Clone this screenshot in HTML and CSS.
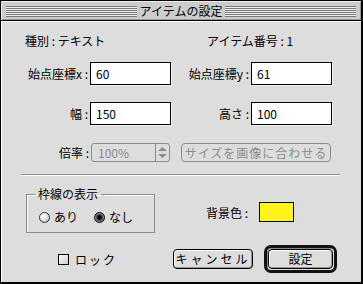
FILE: index.html
```html
<!DOCTYPE html>
<html lang="ja">
	<head>
		<meta charset="UTF-8" />
		<title>アイテムの設定</title>
		<link rel="stylesheet" href="styles.css">
	</head>
	<body>
		<div class="window">
			<div class="titlebar">
				<span class="stripes"></span>
				<span class="title">アイテムの設定</span>
				<span class="stripes"></span>
			</div>
			<div class="content">
				<div class="info-row">
					<span class="kind">種別 : テキスト</span>
					<span>アイテム番号 : 1</span>
				</div>
				<div class="fields">
					<label>始点座標x :</label>
					<div class="edit">60</div>
					<label>始点座標y :</label>
					<div class="edit">61</div>
					<label>幅 :</label>
					<div class="edit">150</div>
					<label>高さ :</label>
					<div class="edit">100</div>
				</div>
				<div class="scale-row">
					<label>倍率 :</label>
					<div class="popup">
						<span class="popup-value">100%</span>
						<span class="popup-arrows">
							<svg width="9" height="11" viewBox="0 0 9 11">
								<path d="M4.5 0 L9 4 L0 4 Z M0 7 L9 7 L4.5 11 Z" fill="#8c8c8c" />
							</svg>
						</span>
					</div>
					<div class="btn disabled fit">サイズを画像に合わせる</div>
				</div>
				<div class="sep"></div>
				<div class="style-row">
					<fieldset class="group">
						<legend>枠線の表示</legend>
						<div class="radio-row">
							<span class="radio"><span class="dot"></span>あり</span>
							<span class="radio on"><span class="dot"></span>なし</span>
						</div>
					</fieldset>
					<div class="bg-color">
						<span>背景色 :</span>
						<span class="swatch"></span>
					</div>
				</div>
				<div class="bottom-row">
					<div class="check"><span class="box"></span>ロック</div>
					<div class="btn cancel">キャンセル</div>
					<div class="default-ring">
						<div class="btn ok">設定</div>
					</div>
				</div>
			</div>
		</div>
	</body>
</html>
```

FILE: styles.css
```css
body {
	margin: 0;
	font-family: "Noto Sans CJK JP", sans-serif;
	font-size: 12px;
	color: #000;
	background: #fff;
}
.window {
	width: 363px;
	height: 284px;
	box-sizing: border-box;
	border: 1px solid #000;
	border-right-width: 2px;
	border-bottom-width: 2px;
	background: #dddddd;
	display: flex;
	flex-direction: column;
}
.titlebar {
	height: 19px;
	border-bottom: 1px solid #000;
	background: #cccccc;
	box-shadow: inset 1px 1px #eeeeee, inset -1px -1px #999999;
	display: flex;
	align-items: center;
	padding: 0 5px;
}
.stripes {
	flex: 1;
	height: 11px;
	margin-top: 1px;
	background: repeating-linear-gradient(to bottom, #7a7a7a 0 1px, #eeeeee 1px 2px);
}
.title {
	padding: 0 3px;
	line-height: 16px;
	font-size: 12px;
}
.content {
	flex: 1;
	box-shadow: inset 1px 1px #ffffff;
}
.info-row {
	display: flex;
	margin-top: 12px;
	padding-left: 24px;
	line-height: 16px;
}
.kind {
	width: 182px;
}
.fields {
	display: grid;
	grid-template-columns: 89px 81px 80px 81px;
	grid-auto-rows: 23px;
	row-gap: 17px;
	margin-top: 13px;
}
.fields label {
	text-align: right;
	padding-right: 2px;
	line-height: 23px;
}
.edit {
	background: #fff;
	border: 1px solid #000;
	box-shadow: 1px 1px #f4f4f4;
	padding-left: 5px;
	line-height: 21px;
}
.scale-row {
	display: flex;
	align-items: center;
	margin-top: 18px;
	height: 19px;
}
.scale-row label {
	width: 88px;
	text-align: right;
}
.popup {
	width: 79px;
	height: 19px;
	box-sizing: border-box;
	margin-left: 2px;
	border: 1px solid #8c8c8c;
	border-radius: 3px;
	display: flex;
	color: #8c8c8c;
}
.popup-value {
	width: 57px;
	padding-left: 6px;
	line-height: 17px;
	border-right: 1px solid #8c8c8c;
}
.popup-arrows {
	flex: 1;
	display: flex;
	align-items: center;
	justify-content: center;
}
.btn {
	box-sizing: border-box;
	height: 20px;
	border: 1px solid #000;
	border-radius: 4px;
	background: #dddddd;
	box-shadow: inset 1px 1px #ffffff, inset -1px -1px #999999;
	text-align: center;
	line-height: 18px;
	letter-spacing: 1px;
}
.btn.disabled {
	border-color: #8c8c8c;
	color: #8c8c8c;
	box-shadow: none;
}
.fit {
	width: 150px;
	height: 19px;
	margin-left: 11px;
	line-height: 17px;
}
.sep {
	height: 1px;
	background: #8c8c8c;
	box-shadow: 0 1px #ffffff;
	margin: 12px 21px 0 20px;
}
.style-row {
	display: flex;
	align-items: flex-start;
	margin-top: 11px;
}
.group {
	width: 129px;
	height: 47px;
	box-sizing: border-box;
	margin: 0 0 0 25px;
	padding: 0;
	border: 1px solid #8c8c8c;
	box-shadow: inset 1px 1px #ffffff;
}
.group legend {
	margin-left: 8px;
	padding: 0 3px;
	line-height: 16px;
}
.radio-row {
	display: flex;
	gap: 16px;
	padding: 7px 0 0 12px;
	line-height: 16px;
}
.radio {
	display: flex;
	align-items: center;
	gap: 4px;
}
.radio .dot {
	width: 11px;
	height: 11px;
	box-sizing: border-box;
	border-radius: 50%;
	border: 1px solid #333;
	background: radial-gradient(circle at 35% 35%, #ffffff 0 25%, #c8c8c8 70%, #8a8a8a);
}
.radio.on .dot {
	border-color: #000;
	background: radial-gradient(circle, #000 0 2px, #555 2.5px 3.5px, #888 4px);
}
.bg-color {
	display: flex;
	align-items: center;
	gap: 11px;
	margin: 16px 0 0 51px;
}
.swatch {
	width: 35px;
	height: 20px;
	box-sizing: border-box;
	border: 1px solid #000;
	background: #fff31c;
}
.bottom-row {
	display: flex;
	align-items: center;
	margin-top: 12px;
	height: 28px;
}
.check {
	display: flex;
	align-items: center;
	gap: 6px;
	margin-left: 57px;
	width: 115px;
	letter-spacing: 2px;
}
.check .box {
	width: 11px;
	height: 11px;
	box-sizing: border-box;
	border: 1px solid #000;
	background: linear-gradient(135deg, #ffffff, #cccccc);
}
.cancel {
	width: 80px;
	letter-spacing: 3px;
}
.default-ring {
	margin-left: 11px;
	padding: 1px;
	border: 3px solid #111;
	border-radius: 7px;
	box-shadow: inset 1px 1px #888;
}
.ok {
	width: 65px;
	letter-spacing: 0;
}
```
